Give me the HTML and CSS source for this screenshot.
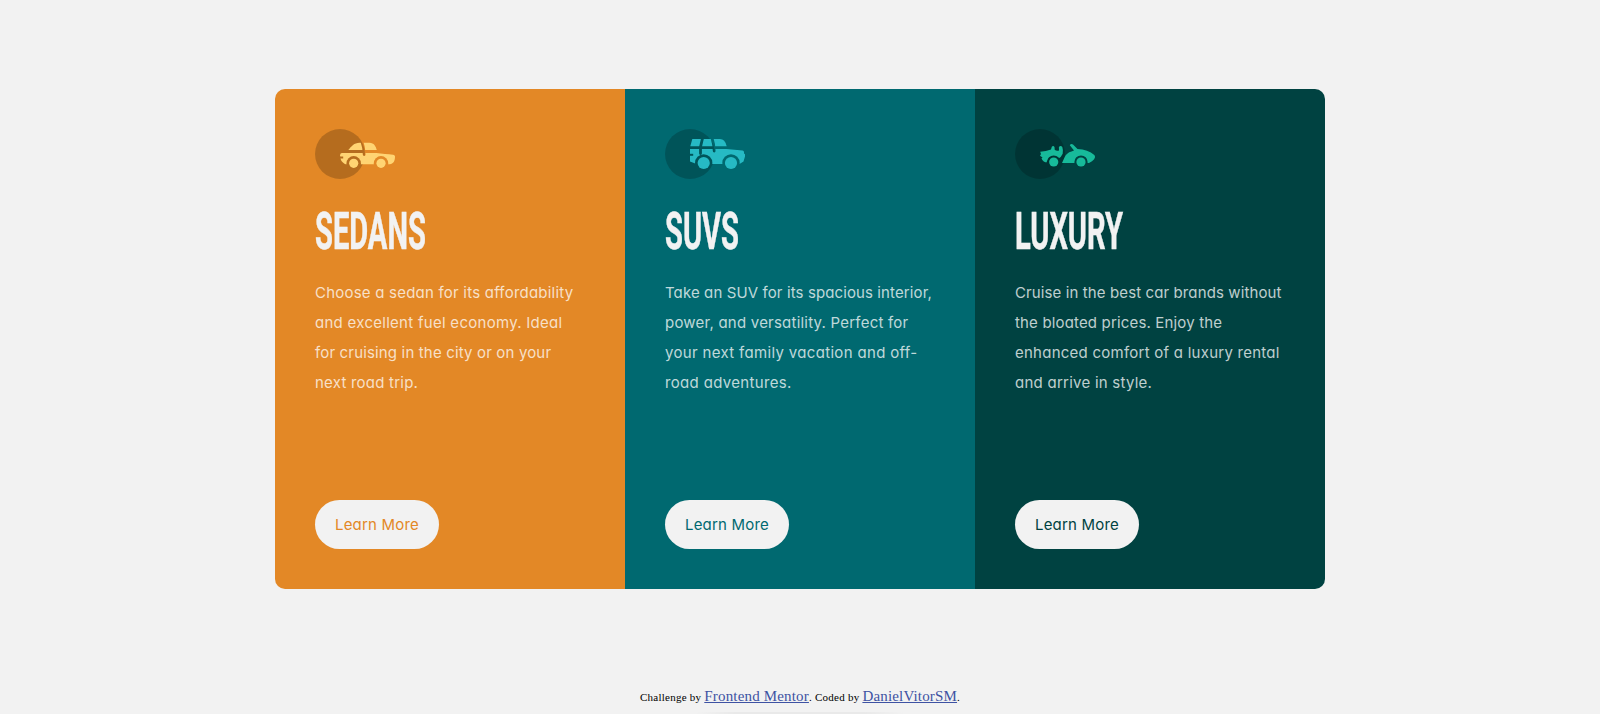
FILE: index.html
```
<!DOCTYPE html>
<html lang="en">
<head>
<meta charset="utf-8">
<title>3-column preview card</title>
<link rel="stylesheet" href="styles.css">
</head>
<body>
<main class="cards">
  <section class="card sedans">
    <svg class="icon" width="80" height="50" viewBox="0 0 80 50">
      <mask id="m1"><rect width="80" height="50" fill="#fff"/><circle cx="38.700" cy="34.300" r="7.200"/><circle cx="66" cy="34.300" r="7.200"/><path d="M47 13Q49 18 49.200 25.500" fill="none" stroke="#000" stroke-width="2.800" stroke-linecap="round"/><path d="M24 27.500h4.200v2H24z"/></mask>
      <circle cx="25" cy="25" r="25" fill="#000" fill-opacity=".2"/>
      <g fill="#ffd473"><g mask="url(#m1)"><path d="M33.300 21C36.500 17.500 39 13.800 44.500 13.800H54.500C59 13.800 60.800 17.500 61.800 21z"/><path d="M27 24H61.500C67 24.700 73 25.200 78 25.800C79.500 26 80 26.700 80 27.500C80 31 79.300 34.500 74.500 35.300H31C28 34.500 25.700 31.500 25.500 29L25 26.300Q25.300 24 27 24z"/></g><circle cx="38.700" cy="34.300" r="4.600"/><circle cx="66" cy="34.300" r="4.600"/></g>
    </svg>
    <h1 class="title"><span class="title-text">SEDANS</span></h1>
    <p class="copy"><span class="ls-22">Choose a sedan for its affordability</span><br><span class="ls-28">and excellent fuel economy. Ideal</span><br><span class="ls-16">for cruising in the city or on your</span><br><span class="ls-22">next road trip.</span></p>
    <a class="btn">Learn More</a>
  </section>
  <section class="card suvs">
    <svg class="icon" width="80" height="50" viewBox="0 0 80 50">
      <mask id="m2"><rect width="80" height="50" fill="#fff"/><circle cx="38.700" cy="34" r="8.700"/><circle cx="66" cy="34" r="8.700"/><path d="M37.600 9L35.500 18V24.500M47 9Q49 15 49.200 22" fill="none" stroke="#000" stroke-width="2.800" stroke-linecap="round"/><path d="M24 24.800h4.200v2H24z"/></mask>
      <circle cx="25" cy="25" r="25" fill="#000" fill-opacity=".2"/>
      <g fill="#26bac4"><g mask="url(#m2)"><path d="M27.300 10H55Q60 10 61.700 17.200H25.300z"/><path d="M25 20H61.500L77.500 21.500Q79 21.700 79 23.300V24.500L80 25.300V27.500L78.500 32.500L74.500 35H31.500L25 32.500z"/></g><circle cx="38.700" cy="34" r="6.100"/><circle cx="66" cy="34" r="6.100"/></g>
    </svg>
    <h1 class="title"><span class="title-text">SUVS</span></h1>
    <p class="copy"><span class="ls-11">Take an SUV for its spacious interior,</span><br><span class="ls-22">power, and versatility. Perfect for</span><br><span class="ls-33">your next family vacation and off-</span><br><span class="ls-33">road adventures.</span></p>
    <a class="btn">Learn More</a>
  </section>
  <section class="card luxury">
    <svg class="icon" width="80" height="50" viewBox="0 0 80 50">
      <mask id="m3"><rect width="80" height="50" fill="#fff"/><circle cx="38.700" cy="33" r="6.600"/><circle cx="66" cy="33" r="6.600"/></mask>
      <circle cx="25" cy="25" r="25" fill="#000" fill-opacity=".2"/>
      <g fill="#17ba9a"><g mask="url(#m3)"><path d="M25.200 22.800Q31 22.300 36 20.500L36.800 17.800Q38.200 16.200 39.500 18L39.700 20.800Q41.500 22.300 44 21.500L43.900 18Q45.600 16 47.300 18Q48.500 21.500 47.700 24.800L45.700 28L43.500 29.500L34 29L31.300 33.500Q28 33 26.500 29.500L27.500 28.500L25 26.800L26 25z"/><path d="M54.800 16.200Q56 14.300 58 15.500L62.500 20Q73 20.500 79.300 26Q81.500 29 77 32.300L74 34H47L49.500 28.500Q51.500 23.800 56.500 22.500L59 21.500z"/></g><circle cx="38.700" cy="33" r="4.600"/><circle cx="66" cy="33" r="4.600"/></g>
    </svg>
    <h1 class="title"><span class="title-text">LUXURY</span></h1>
    <p class="copy"><span class="ls-11">Cruise in the best car brands without</span><br><span class="ls-16">the bloated prices. Enjoy the</span><br><span class="ls-25">enhanced comfort of a luxury rental</span><br><span class="ls-25">and arrive in style.</span></p>
    <a class="btn">Learn More</a>
  </section>
</main>
<footer class="credit">Challenge by <a class="credit-link">Frontend Mentor</a>. Coded by <a class="credit-link">DanielVitorSM</a>.</footer>
<div class="edge-shade"></div>
</body>
</html>
```
FILE: styles.css
```
* { box-sizing: border-box; }
body {
  margin: 0;
  height: 714px;
  padding-top: 89px;
  background: #f2f2f2;
  font-family: Inter, "Open Sans", sans-serif;
  font-feature-settings: "cv11";
  font-size: 15px;
  display: flex;
  flex-direction: column;
  align-items: center;
  overflow: hidden;
}
.cards {
  display: grid;
  grid-template-columns: repeat(3, 350px);
  height: 500px;
  flex: none;
  border-radius: 10px;
  overflow: hidden;
}
.card {
  padding: 40px;
  display: flex;
  flex-direction: column;
  align-items: flex-start;
}
.sedans { background: #e38826; color: #e38826; }
.suvs { background: #006970; color: #006970; }
.luxury { background: #004241; color: #004241; }
.icon { display: block; flex: none; }
.title {
  margin: 27px 0 22px;
  height: 50px;
  line-height: 51px;
  color: #f2f2f2;
  font-family: Roboto, sans-serif;
  font-size: 51px;
  font-weight: 700;
}
.title-text {
  display: inline-block;
  transform: scaleX(.57);
  transform-origin: left center;
  -webkit-text-stroke: .5px #f2f2f2;
}
.copy {
  margin: 0;
  line-height: 30px;
  white-space: nowrap;
  color: rgba(255, 255, 255, .75);
}
.ls-11 { letter-spacing: .11px; }
.ls-16 { letter-spacing: .16px; }
.ls-22 { letter-spacing: .22px; }
.ls-25 { letter-spacing: .25px; }
.ls-28 { letter-spacing: .28px; }
.ls-33 { letter-spacing: .33px; }
.btn {
  margin-top: auto;
  width: 124px;
  height: 49px;
  border-radius: 25px;
  line-height: 49px;
  letter-spacing: .2px;
  text-align: center;
  background: #f2f2f2;
}
.credit {
  margin-top: 96px;
  font: 11px/22px "Liberation Serif", serif;
  letter-spacing: .25px;
  color: #000;
}
.credit-link {
  font-size: 15px;
  letter-spacing: .17px;
  color: #3e52a3;
  text-decoration: underline;
}
.edge-shade {
  margin-top: auto;
  width: 210px;
  height: 2px;
  flex: none;
  background: linear-gradient(90deg, transparent, rgba(0, 0, 0, .04) 20%, rgba(0, 0, 0, .04) 80%, transparent);
}
```
